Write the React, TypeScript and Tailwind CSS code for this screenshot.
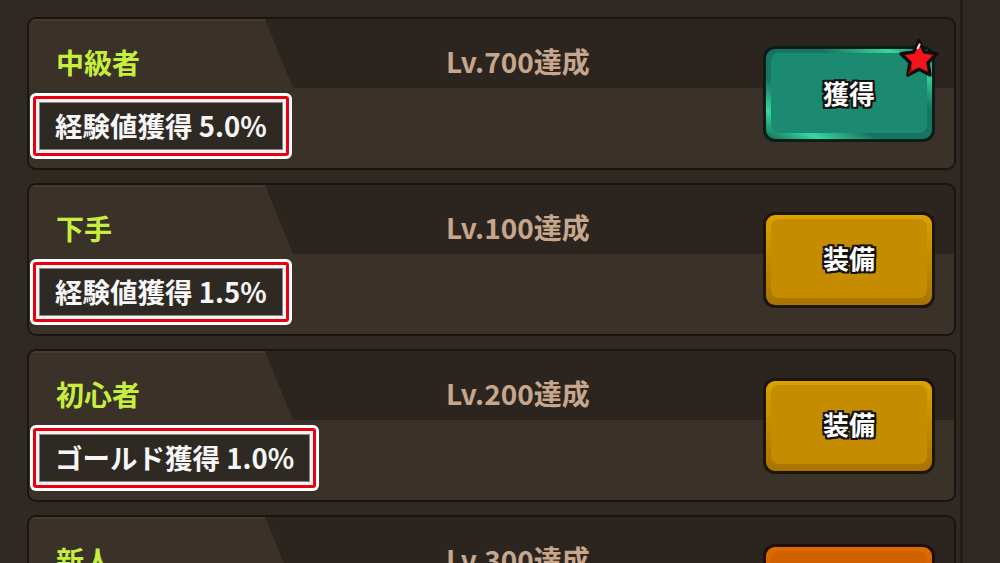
import React from "react";

type Title = {
  name: string;
  level: number;
  bonus: string;
  action: "get" | "equip" | "orange";
};

const TITLES: Title[] = [
  { name: "中級者", level: 700, bonus: "経験値獲得 5.0%", action: "get" },
  { name: "下手", level: 100, bonus: "経験値獲得 1.5%", action: "equip" },
  { name: "初心者", level: 200, bonus: "ゴールド獲得 1.0%", action: "equip" },
  { name: "新人", level: 300, bonus: "ゴールド獲得 0.5%", action: "orange" },
];

const outlined =
  "[text-shadow:2px_0_#141210,-2px_0_#141210,0_2px_#141210,0_-2px_#141210,2px_2px_#141210,-2px_-2px_#141210,2px_-2px_#141210,-2px_2px_#141210]";

const Star = () => (
  <svg
    viewBox="0 0 24 24"
    className="absolute -right-[10px] -top-[13px] w-[46px] h-[46px]"
  >
    <path
      d="M12 2.5l2.9 5.9 6.5.9-4.7 4.6 1.1 6.5L12 17.3l-5.8 3.1 1.1-6.5L2.6 9.3l6.5-.9z"
      fill="#f5141a"
      stroke="#120c0c"
      strokeWidth="1.8"
      strokeLinejoin="round"
    />
    <path
      d="M11.3 6.4l1-2"
      stroke="#ffd6d6"
      strokeWidth="1.1"
      strokeLinecap="round"
    />
    <path d="M8 17l-1.2 2.4" stroke="#b00008" strokeWidth="0.9" strokeLinecap="round" />
  </svg>
);

const ActionButton = ({ kind }: { kind: Title["action"] }) => {
  if (kind === "get") {
    return (
      <div className="relative w-[172px] h-[96px] mr-[19px] shrink-0 rounded-[12px] border-[3px] border-[#0b1d18] bg-[linear-gradient(to_top_right,#146a57_0%,#36d9a0_16%,#157560_34%,#157560_66%,#36d9a0_86%,#146a57_100%)] pt-[4px] px-[5px] pb-[6px]">
        <div className="h-full rounded-[8px] bg-[#1c8a71] flex items-center justify-center">
          <span className={`text-white font-bold text-[26px] leading-none ${outlined}`}>
            獲得
          </span>
        </div>
        <Star />
      </div>
    );
  }
  if (kind === "equip") {
    return (
      <div className="relative w-[172px] h-[96px] mr-[19px] shrink-0 rounded-[12px] border-[3px] border-[#1e1408] bg-[linear-gradient(to_bottom,#dba300,#a87300)] pt-[4px] px-[5px] pb-[7px]">
        <div className="h-full rounded-[8px] bg-[#c68c00] flex items-center justify-center">
          <span className={`text-white font-bold text-[26px] leading-none ${outlined}`}>
            装備
          </span>
        </div>
      </div>
    );
  }
  return (
    <div className="relative w-[172px] h-[96px] mr-[19px] shrink-0 rounded-[12px] border-[3px] border-[#1e1006] bg-[linear-gradient(to_bottom,#e06c00,#a84800)] pt-[4px] px-[5px] pb-[7px]">
      <div className="h-full rounded-[8px] bg-[#d16200] flex items-center justify-center">
        <span className={`text-white font-bold text-[26px] leading-none ${outlined}`}>
          解除
        </span>
      </div>
    </div>
  );
};

const TitleCard = ({ item }: { item: Title }) => (
  <div className="w-[929px] h-[153px] shrink-0 rounded-[9px] border-2 border-[#1a1512] bg-[linear-gradient(to_bottom,#2c251f_69px,#3a3129_69px)] flex items-center overflow-hidden">
    <div className="flex-1 self-stretch flex flex-col">
      <div className="h-[69px] flex">
        <div className="w-[264px] h-full bg-[#3a3129] [clip-path:polygon(0_0,236px_0,100%_100%,0_100%)] pl-[27px] pt-[29px] shadow-[inset_0_2px_0_#443a30]">
          <div className="text-[28px] font-bold leading-none text-[#c6ee3c]">
            {item.name}
          </div>
        </div>
        <div className="ml-[153px] pt-[28px] text-[28px] font-bold leading-none text-[#c6a68c]">
          Lv.{item.level}達成
        </div>
      </div>
      <div className="pt-[5px] pl-[1px]">
        <div className="inline-block rounded-[6px] bg-white p-[3px]">
          <div className="rounded-[3px] bg-[#e8000f] p-[3px]">
            <div className="bg-[#f4f4f4] p-[3px]">
              <div className="border border-[#8e8883] bg-[#2f2924] h-[48px] px-[15px] flex items-center">
                <span className="text-[27.5px] font-bold leading-none text-[#f6f6f6] whitespace-nowrap">
                  {item.bonus}
                </span>
              </div>
            </div>
          </div>
        </div>
      </div>
    </div>
    <ActionButton kind={item.action} />
  </div>
);

export default function App() {
  return (
    <div className="w-[1000px] h-[563px] overflow-hidden bg-[#2f2924] font-['Noto_Sans_CJK_JP',sans-serif] flex">
      <div className="pt-[17px] pl-[27px] flex flex-col gap-[13px]">
        {TITLES.map((t) => (
          <TitleCard key={t.name} item={t} />
        ))}
      </div>
      <div className="ml-[4px] w-[3px] bg-[#221d19]" />
    </div>
  );
}
